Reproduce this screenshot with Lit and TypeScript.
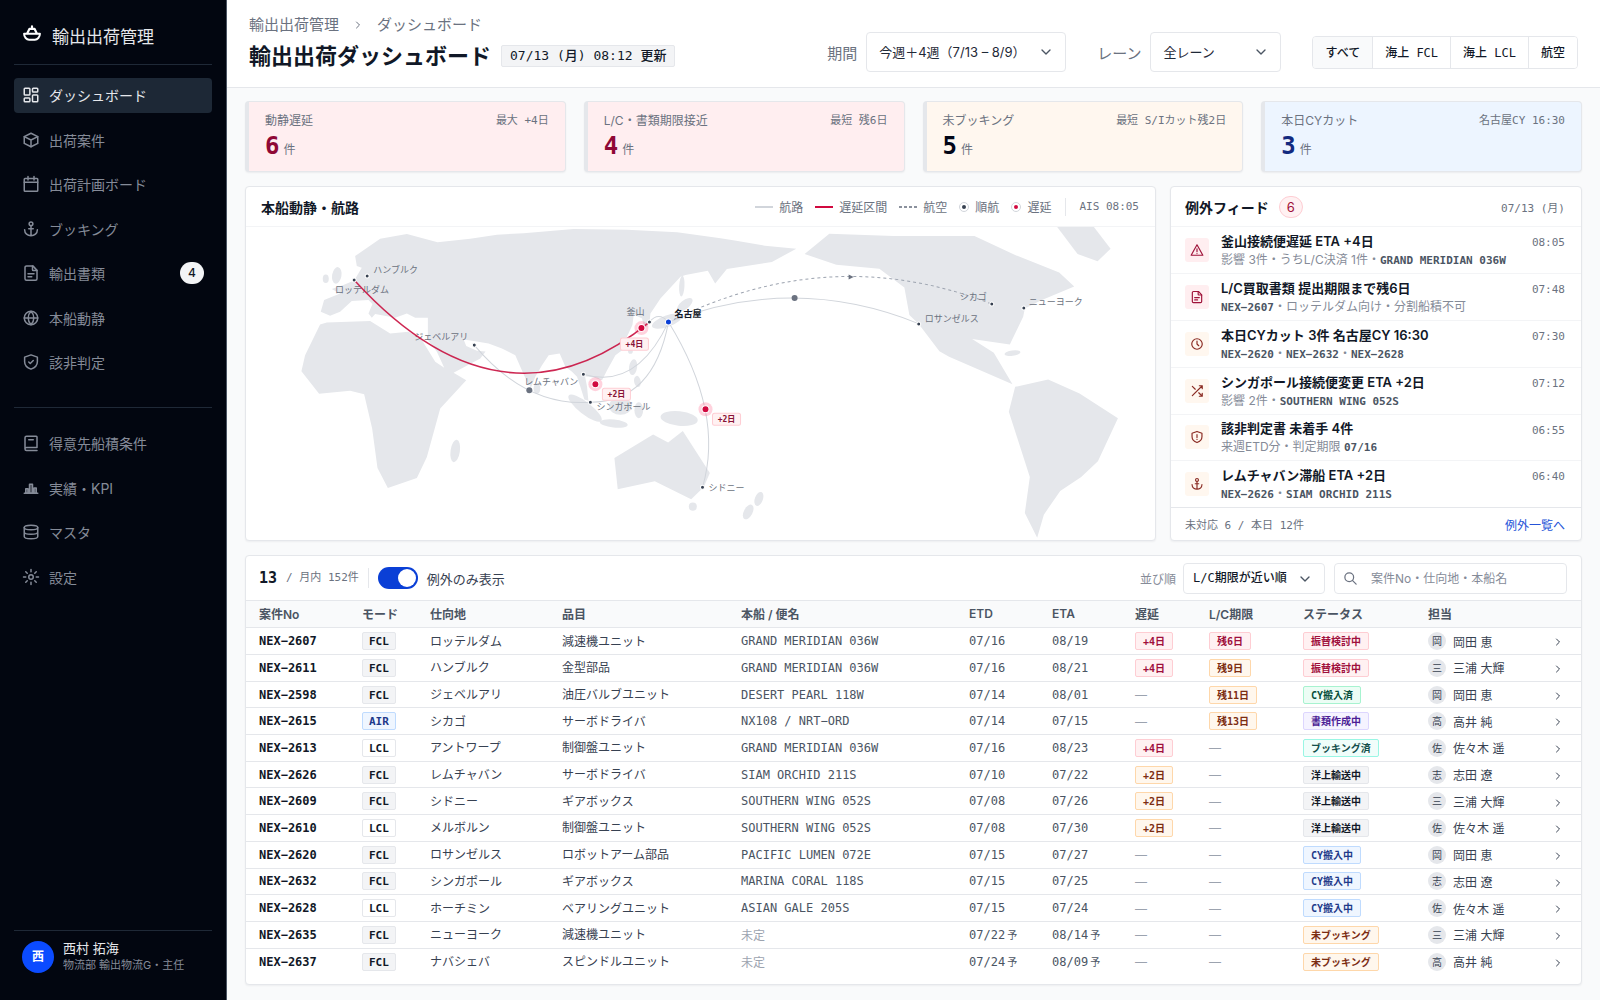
import { LitElement, html, svg, css, nothing, type TemplateResult } from "lit";
import { customElement, property } from "lit/decorators.js";
import { classMap } from "lit/directives/class-map.js";

const SANS = css`Inter, "Noto Sans CJK JP", sans-serif`;
const MONO = css`"DejaVu Sans Mono", "Noto Sans CJK JP", monospace`;

/* ---------- icons (24 unit grid, stroked) ---------- */

const ICONS: Record<string, TemplateResult> = {
  ship: svg`<path d="M12 4v3M6.500 12l2.500-5h6l2.500 5" stroke-width="2.600" /><path d="M2.500 13h19c0 4-3 7-6 7h-7c-3 0-6-3-6-7z" stroke-width="2.400" />`,
  dashboard: svg`<rect x="3" y="3" width="7.500" height="9" rx="1" /><rect x="3" y="16" width="7.500" height="5" rx="1" /><rect x="14" y="3" width="7" height="5" rx="1" /><rect x="14" y="12" width="7" height="9" rx="1" />`,
  box: svg`<path d="M12 3l9 4.500v9L12 21l-9-4.500v-9z" /><path d="M12 12l9-4.500M12 12v9M12 12L3 7.500" />`,
  calendar: svg`<rect x="3" y="4.500" width="18" height="17" rx="1" /><path d="M8 2v4.500M16 2v4.500M3 9.500h18" />`,
  anchor: svg`<path d="M12 8v13M3.500 13c0 5 4 8 8.500 8s8.500-3 8.500-8M9 11.500h6" /><circle cx="12" cy="5" r="2.500" />`,
  file: svg`<path d="M14 2.500v5a1 1 0 0 0 1 1h5" /><path d="M18 21.500H6a2 2 0 0 1-2-2v-15a2 2 0 0 1 2-2h8.500l5.500 6v11a2 2 0 0 1-2 2zM8 13h8M8 17h5" />`,
  globe: svg`<circle cx="12" cy="12" r="9" /><path d="M3 12h18M12 3c-5 5-5 13 0 18M12 3c5 5 5 13 0 18" />`,
  shieldCheck: svg`<path d="M12 2.500l8.500 3v6c0 5-3 8-8.500 10-5.500-2-8.500-5-8.500-10v-6z" /><path d="M9 12l2 2 4-4" />`,
  book: svg`<path d="M20 18H6a2 2 0 0 0-2 2V5a2 2 0 0 1 2-2h13a1 1 0 0 1 1 1v14M20 22H6a2 2 0 0 1-2-2M9 7.500h6" />`,
  chart: svg`<path d="M3 19h18" /><path d="M5 13h3v6H5zM10 7h4v12h-4zM16 12h3v7h-3z" fill="currentColor" fill-opacity=".5" />`,
  database: svg`<ellipse cx="12" cy="6" rx="9" ry="3" /><path d="M3 6v6c0 2 4.500 3 9 3s9-1 9-3V6M3 12v6c0 2 4.500 3 9 3s9-1 9-3v-6" />`,
  sun: svg`<circle cx="12" cy="12" r="3" /><path d="M12 2v3M12 19v3M2 12h3M19 12h3M5 5l2 2M17 17l2 2M5 19l2-2M17 7l2-2" />`,
  alert: svg`<path d="M12 3L2 21h20z" /><path d="M12 10v5M12 18v.2" />`,
  clock: svg`<circle cx="12" cy="12" r="9" /><path d="M12 7v5l3 3" />`,
  shuffle: svg`<path d="M16 3h5v5M4 20L21 3M21 16v5h-5M15 15l6 6M4 4l5 5" />`,
  shieldAlert: svg`<path d="M12 2.500l8.500 3v6c0 5-3 8-8.500 10-5.500-2-8.500-5-8.500-10v-6z" /><path d="M12 8v5M12 16v.3" />`,
  chevronDown: svg`<path d="M6 9l6 6 6-6" />`,
  chevronRight: svg`<path d="M9 6l6 6-6 6" />`,
  search: svg`<circle cx="10" cy="10" r="7" /><path d="M21 21l-6-6" />`,
};

@customElement("line-icon")
export class LineIcon extends LitElement {
  @property() name = "";

  static styles = css`
    :host { display: inline-flex; flex: none; width: 18px; height: 18px; }
    .glyph { width: 100%; height: 100%; }
  `;

  render() {
    return html`<svg class="glyph" viewBox="0 0 24 24" fill="none" stroke="currentColor" stroke-width="2"
      stroke-linecap="round" stroke-linejoin="round" aria-hidden="true">${ICONS[this.name]}</svg>`;
  }
}

/* ---------- sidebar ---------- */

interface NavItem { icon: string; label: string; badge?: number; active?: boolean }

const NAV_MAIN: NavItem[] = [
  { icon: "dashboard", label: "ダッシュボード", active: true },
  { icon: "box", label: "出荷案件" },
  { icon: "calendar", label: "出荷計画ボード" },
  { icon: "anchor", label: "ブッキング" },
  { icon: "file", label: "輸出書類", badge: 4 },
  { icon: "globe", label: "本船動静" },
  { icon: "shieldCheck", label: "該非判定" },
];

const NAV_SUB: NavItem[] = [
  { icon: "book", label: "得意先船積条件" },
  { icon: "chart", label: "実績・KPI" },
  { icon: "database", label: "マスタ" },
  { icon: "sun", label: "設定" },
];

@customElement("side-bar")
export class SideBar extends LitElement {
  static styles = css`
    :host {
      display: flex; flex-direction: column; box-sizing: border-box; padding: 0 14px 27px 14px;
      background: #020610; border-right: 1px solid #4b5563; color: #858b98; font-family: ${SANS};
    }
    .brand { display: flex; align-items: center; gap: 10px; height: 65px; padding: 6px 8px 0; box-sizing: border-box; color: #e5e7eb; font-size: 17px; border-bottom: 1px solid #1f2937; }
    .brand-icon { width: 20px; height: 20px; color: #fff; margin-bottom: 4px; }
    .list { list-style: none; margin: 0; padding: 0; display: flex; flex-direction: column; justify-content: space-between; }
    .main-list { margin-top: 13px; height: 302px; }
    .sub-list { margin-top: 18px; height: 169px; }
    .rule { border: 0; border-top: 1px solid #1f2937; margin: 27px 0 0; }
    .link { display: flex; align-items: center; gap: 9px; box-sizing: border-box; height: 35px; padding: 0 8px 1px; border-radius: 4px; font-size: 14px; color: inherit; text-decoration: none; }
    .active { background: #1d2836; color: #e5e7eb; }
    .count { margin-left: auto; width: 24px; height: 22px; border-radius: 11px; background: #f3f4f6; color: #111827; font: 500 12px/22px ${SANS}; text-align: center; }
    .user { margin-top: auto; border-top: 1px solid #1f2937; padding: 9px 8px 0; display: flex; align-items: center; gap: 9px; }
    .face { width: 32px; height: 32px; border-radius: 50%; background: #0b4bff; color: #fff; font-size: 12px; font-weight: 700; line-height: 32px; text-align: center; }
    .who { display: flex; flex-direction: column; }
    .name { font-size: 13px; line-height: 17px; color: #e5e7eb; }
    .role { font-size: 11px; line-height: 16px; }
  `;

  private item(i: NavItem) {
    return html`<li><a href="#" class=${classMap({ link: true, active: !!i.active })}>
      <line-icon name=${i.icon}></line-icon><span>${i.label}</span>
      ${i.badge ? html`<span class="count">${i.badge}</span>` : nothing}</a></li>`;
  }

  render() {
    return html`
      <div class="brand"><line-icon class="brand-icon" name="ship"></line-icon><span>輸出出荷管理</span></div>
      <nav>
        <ul class="list main-list">${NAV_MAIN.map((i) => this.item(i))}</ul>
        <hr class="rule" />
        <ul class="list sub-list">${NAV_SUB.map((i) => this.item(i))}</ul>
      </nav>
      <div class="user"><span class="face">西</span>
        <div class="who"><span class="name">西村 拓海</span><span class="role">物流部 輸出物流G・主任</span></div>
      </div>`;
  }
}

/* ---------- page header ---------- */

@customElement("page-header")
export class PageHeader extends LitElement {
  static styles = css`
    :host { display: flex; justify-content: space-between; align-items: flex-end; box-sizing: border-box; padding: 12px 22px 15px 22px; background: #fff; border-bottom: 1px solid #e5e7eb; font-family: ${SANS}; color: #111827; }
    .crumbs { display: flex; align-items: center; gap: 13px; font-size: 15px; line-height: 25px; color: #6b7280; margin-bottom: 3px; }
    .crumb { color: inherit; text-decoration: none; }
    .sep { width: 12px; height: 12px; }
    .title-row { display: flex; align-items: center; gap: 10px; }
    .title { margin: 0; font-size: 22px; line-height: 32px; font-weight: 600; white-space: nowrap; }
    .stamp { box-sizing: border-box; height: 22px; padding: 0 8px; border: 1px solid #e5e7eb; border-radius: 2px; background: #f3f4f6; font: 500 13px/20px ${MONO}; white-space: nowrap; }
    .filters { display: flex; align-items: center; }
    .label { font-size: 15px; color: #6b7280; margin-right: 9px; }
    .pick { position: relative; display: flex; width: 131px; margin-right: 31px; }
    .pick-period { width: 200px; }
    .select { appearance: none; width: 100%; height: 40px; padding: 0 30px 0 12px; border: 1px solid #e5e7eb; border-radius: 4px; background: #fff; color: #1f2937; font: 400 13px ${SANS}; }
    .caret { position: absolute; right: 12px; top: 12px; width: 16px; height: 16px; color: #4b5563; pointer-events: none; }
    .segments { display: flex; border: 1px solid #e5e7eb; border-radius: 4px; overflow: hidden; }
    .seg { border: 0; border-left: 1px solid #e5e7eb; padding: 0 12px 2px; height: 31px; background: #fff; color: #111827; font: 500 12px ${MONO}; white-space: nowrap; }
    .seg:first-child { border-left: 0; background: #f9fafb; }
  `;

  render() {
    return html`
      <div>
        <nav class="crumbs"><a class="crumb" href="#">輸出出荷管理</a><line-icon class="sep" name="chevronRight"></line-icon><span>ダッシュボード</span></nav>
        <div class="title-row"><h1 class="title">輸出出荷ダッシュボード</h1><span class="stamp">07/13 (月) 08:12 更新</span></div>
      </div>
      <div class="filters">
        <label class="label" for="period">期間</label>
        <span class="pick pick-period"><select class="select" id="period"><option>今週＋4週（7/13 – 8/9）</option></select><line-icon class="caret" name="chevronDown"></line-icon></span>
        <label class="label" for="lane">レーン</label>
        <span class="pick"><select class="select" id="lane"><option>全レーン</option></select><line-icon class="caret" name="chevronDown"></line-icon></span>
        <div class="segments" role="group" aria-label="輸送モード">
          ${["すべて", "海上 FCL", "海上 LCL", "航空"].map((t) => html`<button class="seg" type="button">${t}</button>`)}
        </div>
      </div>`;
  }
}

/* ---------- KPI cards ---------- */

const KPIS = [
  { label: "動静遅延", value: 6, note: "最大 +4日", tone: "rose" },
  { label: "L/C・書類期限接近", value: 4, note: "最短 残6日", tone: "rose" },
  { label: "未ブッキング", value: 5, note: "最短 S/Iカット残2日", tone: "amber" },
  { label: "本日CYカット", value: 3, note: "名古屋CY 16:30", tone: "blue" },
];

@customElement("kpi-strip")
export class KpiStrip extends LitElement {
  static styles = css`
    :host { display: grid; grid-template-columns: repeat(4, minmax(0, 1fr)); gap: 18px; font-family: ${SANS}; }
    .card { box-sizing: border-box; height: 71px; padding: 9px 16px 0; border: 1px solid #e5e7eb; border-left-width: 4px; border-radius: 4px; box-shadow: 0 1px 2px rgba(17, 24, 39, 0.06); color: #6b7280; }
    .rose { background: #ffeef0; }
    .amber { background: #fff7ef; }
    .blue { background: #edf5ff; }
    .top { display: flex; justify-content: space-between; align-items: center; font-size: 12px; line-height: 18px; }
    .note { font: 11px/20px ${MONO}; }
    .figure { display: flex; align-items: baseline; gap: 4px; line-height: 30px; }
    .value { font: 700 24px/30px ${MONO}; color: #020617; }
    .rose .value { color: #8f0836; }
    .blue .value { color: #12297f; }
    .unit { font-size: 12px; }
  `;

  render() {
    return KPIS.map((k) => html`<section class="card ${k.tone}">
      <div class="top"><span>${k.label}</span><span class="note">${k.note}</span></div>
      <div class="figure"><span class="value">${k.value}</span><span class="unit">件</span></div>
    </section>`);
  }
}

/* ---------- route map ---------- */

const LAND = [
  "345,228 420,176 500,162 592,187 690,176 770,164 850,160 1000,147 1160,149 1310,157 1440,175 1487,182 1573,197 1667,206 1594,246 1459,267 1424,310 1402,272 1335,285 1320,290 1260,355 1230,400 1228,420 1220,440 1210,440 1205,415 1180,403 1176,435 1155,480 1145,510 1125,525 1100,570 1085,600 1060,592 1034,588 1040,620 1044,662 1032,658 1020,620 1010,590 995,575 975,560 958,520 925,525 905,555 885,590 872,622 858,600 840,560 825,525 785,505 745,490 700,483 670,478 678,498 710,512 736,514 720,535 640,578 678,600 600,685 560,830 530,893 443,923 412,863 396,745 372,642 330,632 237,641 184,573 195,525 240,433 260,427 390,423 450,460 505,455 545,480 585,545 612,563 590,515 563,480 563,413 525,413 500,400 465,413 405,402 395,413 385,400 397,372 385,360 335,363 300,395 270,407 242,395 252,360 300,340 275,327 310,315 342,301 365,263 350,258",
  "1122,833 1238,763 1283,787 1327,752 1408,878 1390,920 1352,957 1243,903 1132,927",
  "1692,222 1766,161 1959,168 2201,168 2323,225 2455,277 2500,319 2398,362 2352,385 2347,410 2307,493 2194,477 2259,518 2315,612 2125,530 2096,513 2034,432 2006,405 1991,322 1916,266 1787,254",
  "2449,141 2559,141 2609,206 2570,244 2510,222",
  "2323,620 2422,598 2516,640 2631,714 2571,843 2521,890 2458,932 2409,1003 2389,1072 2352,998 2367,890 2304,695",
];

// cx, cy, rx, ry, rotation
const ISLANDS: number[][] = [
  [290, 286, 14, 25, 10], [257, 296, 9, 13, 0], [645, 812, 14, 34, 8], [890, 625, 10, 16, 0],
  [1034, 684, 62, 18, 38], [1120, 730, 42, 12, 6], [1140, 678, 34, 26, 0], [1195, 690, 13, 24, 0],
  [1178, 561, 12, 24, 8], [1191, 604, 10, 17, -10], [1170, 513, 7, 8, 0], [1316, 715, 56, 22, 6],
  [1280, 423, 48, 17, -20], [1333, 374, 28, 13, -38], [1324, 318, 8, 31, 3], [1357, 979, 12, 12, 0],
  [1555, 956, 12, 22, 20], [1523, 995, 13, 24, 28], [2315, 519, 24, 8, -8],
];

const ROUTES = [
  "M422 95Q412 84 403 95",
  "M422 95Q390 163 337 147",
  "M422 95Q407 175 344 175",
  "M344 175Q280 180 228 118",
  "M422 95Q478 186 456 260",
  "M422 95Q548 46 673 97",
];

interface Port { x: number; y: number; lx: number; ly: number; name: string; end?: boolean; home?: boolean }

const PORTS: Port[] = [
  { x: 108, y: 53, lx: 89, ly: 66, name: "ロッテルダム" },
  { x: 121, y: 49, lx: 127, ly: 46, name: "ハンブルク" },
  { x: 228, y: 118, lx: 222, ly: 113, name: "ジェベルアリ", end: true },
  { x: 337, y: 147, lx: 332, ly: 158, name: "レムチャバン", end: true },
  { x: 344, y: 175, lx: 350, ly: 183, name: "シンガポール" },
  { x: 403, y: 95, lx: 398, ly: 88, name: "釜山", end: true },
  { x: 422, y: 95, lx: 428, ly: 90, name: "名古屋", home: true },
  { x: 456, y: 260, lx: 462, ly: 264, name: "シドニー" },
  { x: 672, y: 97, lx: 678, ly: 95, name: "ロサンゼルス" },
  { x: 745, y: 77, lx: 740, ly: 73, name: "シカゴ", end: true },
  { x: 777, y: 81, lx: 782, ly: 78, name: "ニューヨーク" },
];

const DELAYED = [
  { x: 395, y: 101, bx: 374, by: 111, text: "+4日" },
  { x: 349, y: 157, bx: 356, by: 161, text: "+2日" },
  { x: 459, y: 182, bx: 466, by: 186, text: "+2日" },
];

@customElement("route-map")
export class RouteMap extends LitElement {
  static styles = css`
    :host { display: flex; flex-direction: column; border: 1px solid #e5e7eb; border-radius: 4px; background: #fff; overflow: hidden; padding-bottom: 1px; font-family: ${SANS}; box-shadow: 0 1px 2px rgba(17, 24, 39, 0.05); }
    .head { display: flex; align-items: center; justify-content: space-between; height: 39px; padding: 0 16px 0 15px; border-bottom: 1px solid #f3f4f6; }
    .title { margin: 0; font-size: 14px; font-weight: 600; color: #111827; }
    .legend { display: flex; align-items: center; gap: 12px; font-size: 12px; color: #6b7280; }
    .key { display: flex; align-items: center; gap: 6px; }
    .line { width: 18px; height: 2px; background: #d1d5db; }
    .late { background: #d1093f; }
    .air { background: repeating-linear-gradient(90deg, #8b919d 0 3px, transparent 3px 5px); }
    .dot { width: 4px; height: 4px; border-radius: 50%; background: #374151; border: 2px solid #fff; outline: 1px solid #d1d5db; margin: 0 1px; }
    .dot-late { background: #d1093f; }
    .ais { border-left: 1px solid #e5e7eb; margin-left: 2px; padding-left: 13px; font: 11px/18px ${MONO}; }
    .map { display: block; width: 100%; height: auto; }
    .land { fill: #e5e7eb; }
    .route { fill: none; stroke: #d1d5db; stroke-width: 1; }
    .route-late { fill: none; stroke: #c8103f; stroke-width: 1.5; stroke-opacity: 0.9; }
    .route-air { fill: none; stroke: #9ca3af; stroke-width: 1; stroke-dasharray: 3 3; }
    .port { fill: #374151; stroke: #fff; stroke-width: 1; }
    .home { fill: #0a3fd6; }
    .ship { fill: #6b7280; }
    .halo { fill: #ff2056; fill-opacity: 0.2; }
    .hot { fill: #d1093f; stroke: #fff; stroke-width: 1; }
    .name { font-size: 9px; fill: #6b7280; }
    .name-home { font-weight: 700; fill: #111827; }
    .tag { fill: #fff1f2; stroke: #fecdd3; }
    .tag-text { font: 700 8px ${MONO}; fill: #881337; }
  `;

  render() {
    return html`
      <header class="head">
        <h2 class="title">本船動静・航路</h2>
        <div class="legend">
          <span class="key"><i class="line"></i>航路</span>
          <span class="key"><i class="line late"></i>遅延区間</span>
          <span class="key"><i class="line air"></i>航空</span>
          <span class="key"><i class="dot"></i>順航</span>
          <span class="key"><i class="dot dot-late"></i>遅延</span>
          <span class="ais">AIS 08:05</span>
        </div>
      </header>
      <svg class="map" viewBox="0 0 908 312" role="img" aria-label="本船動静・航路">
        <g class="land" transform="translate(-6 -47) scale(0.33333)">
          ${LAND.map((p) => svg`<polygon points=${p} />`)}
          ${ISLANDS.map(([cx, cy, rx, ry, r]) => svg`<ellipse cx=${cx} cy=${cy} rx=${rx} ry=${ry} transform="rotate(${r} ${cx} ${cy})" />`)}
        </g>
        ${ROUTES.map((d) => svg`<path class="route" d=${d} />`)}
        <path class="route-air" d="M422 95Q584 14 745 77" />
        ${PORTS.map((p) => svg`<text class=${p.home ? "name name-home" : "name"} x=${p.lx} y=${p.ly} text-anchor=${p.end ? "end" : "start"}>${p.name}</text>`)}
        <path class="route-late" d="M403 95Q256 215 108 53" />
        <path class="ship" d="M602 47.500l5 2.500-5 2.500z" />
        <circle class="ship" cx="283" cy="163" r="3" />
        <circle class="ship" cx="548" cy="71" r="3" />
        ${PORTS.map((p) => svg`<circle class=${p.home ? "port home" : "port"} cx=${p.x} cy=${p.y} r=${p.home ? 3 : 2} />`)}
        ${DELAYED.map((s) => svg`
          <circle class="halo" cx=${s.x} cy=${s.y} r="7" /><circle class="hot" cx=${s.x} cy=${s.y} r="3.500" />
          <rect class="tag" x=${s.bx} y=${s.by} width="28" height="12" rx="2" />
          <text class="tag-text" x=${s.bx + 14} y=${s.by + 9} text-anchor="middle">${s.text}</text>`)}
      </svg>`;
  }
}

/* ---------- exception feed ---------- */

const code = (t: string) => html`<b class="code">${t}</b>`;

const FEED = [
  { icon: "alert", tone: "rose", title: "釜山接続便遅延 ETA +4日", time: "08:05", sub: html`影響 3件・うちL/C決済 1件・${code("GRAND MERIDIAN 036W")}` },
  { icon: "file", tone: "rose", title: "L/C買取書類 提出期限まで残6日", time: "07:48", sub: html`${code("NEX−2607")}・ロッテルダム向け・分割船積不可` },
  { icon: "clock", tone: "amber", title: "本日CYカット 3件 名古屋CY 16:30", time: "07:30", sub: html`${code("NEX−2620")}・${code("NEX−2632")}・${code("NEX−2628")}` },
  { icon: "shuffle", tone: "amber", title: "シンガポール接続便変更 ETA +2日", time: "07:12", sub: html`影響 2件・${code("SOUTHERN WING 052S")}` },
  { icon: "shieldAlert", tone: "amber", title: "該非判定書 未着手 4件", time: "06:55", sub: html`来週ETD分・判定期限 ${code("07/16")}` },
  { icon: "anchor", tone: "amber", title: "レムチャバン滞船 ETA +2日", time: "06:40", sub: html`${code("NEX−2626")}・${code("SIAM ORCHID 211S")}` },
];

@customElement("exception-feed")
export class ExceptionFeed extends LitElement {
  static styles = css`
    :host { display: flex; flex-direction: column; border: 1px solid #e5e7eb; border-radius: 4px; background: #fff; font-family: ${SANS}; color: #6b7280; box-shadow: 0 1px 2px rgba(17, 24, 39, 0.05); }
    .head { display: flex; align-items: center; gap: 10px; height: 39px; padding: 0 16px 0 14px; border-bottom: 1px solid #f3f4f6; }
    .title { margin: 0; font-size: 14px; font-weight: 600; color: #111827; }
    .count { box-sizing: border-box; width: 24px; height: 22px; border: 1px solid #fecdd3; border-radius: 11px; background: #fff1f2; color: #9f1239; font-size: 13px; line-height: 20px; text-align: center; }
    .date { margin-left: auto; font: 11px ${MONO}; }
    .list { list-style: none; margin: 0; padding: 0; flex: 1; display: grid; grid-auto-rows: 1fr; }
    .row { display: flex; align-items: center; gap: 12px; padding: 0 16px 0 14px; border-bottom: 1px solid #f3f4f6; }
    .row:last-child { border-bottom-color: #e5e7eb; }
    .badge { display: flex; align-items: center; justify-content: center; width: 24px; height: 24px; border-radius: 3px; }
    .rose { background: #ffeef0; color: #9f1239; }
    .amber { background: #fff7ef; color: #8a2a22; }
    .ico { width: 14px; height: 14px; }
    .body { flex: 1; min-width: 0; }
    .line { margin: 0; font-size: 13px; line-height: 19px; font-weight: 600; color: #111827; white-space: nowrap; }
    .sub { margin: 0; font-size: 12px; line-height: 17px; color: #858b98; white-space: nowrap; }
    .code { font: 700 11px ${MONO}; color: #4b5563; }
    .time { align-self: flex-start; padding-top: 6px; font: 11px/19px ${MONO}; }
    .foot { display: flex; justify-content: space-between; align-items: center; height: 32px; padding: 0 16px 0 14px; font: 11px ${MONO}; }
    .all { font: 12px ${SANS}; color: #2554d8; text-decoration: none; }
  `;

  render() {
    return html`
      <header class="head"><h2 class="title">例外フィード</h2><span class="count">6</span><span class="date">07/13 (月)</span></header>
      <ul class="list">
        ${FEED.map((f) => html`<li class="row">
          <span class="badge ${f.tone}"><line-icon class="ico" name=${f.icon}></line-icon></span>
          <div class="body"><p class="line">${f.title}</p><p class="sub">${f.sub}</p></div>
          <time class="time">${f.time}</time>
        </li>`)}
      </ul>
      <footer class="foot"><span>未対応 6 / 本日 12件</span><a class="all" href="#">例外一覧へ</a></footer>`;
  }
}

/* ---------- shipment table ---------- */

// id, mode, destination, item, vessel, ETD, ETA, delay, L/C, status, owner
const ROWS: string[][] = [
  ["NEX−2607", "FCL", "ロッテルダム", "減速機ユニット", "GRAND MERIDIAN 036W", "07/16", "08/19", "+4日", "残6日", "振替検討中", "岡田 恵"],
  ["NEX−2611", "FCL", "ハンブルク", "金型部品", "GRAND MERIDIAN 036W", "07/16", "08/21", "+4日", "残9日", "振替検討中", "三浦 大輝"],
  ["NEX−2598", "FCL", "ジェベルアリ", "油圧バルブユニット", "DESERT PEARL 118W", "07/14", "08/01", "", "残11日", "CY搬入済", "岡田 恵"],
  ["NEX−2615", "AIR", "シカゴ", "サーボドライバ", "NX108 / NRT−ORD", "07/14", "07/15", "", "残13日", "書類作成中", "高井 純"],
  ["NEX−2613", "LCL", "アントワープ", "制御盤ユニット", "GRAND MERIDIAN 036W", "07/16", "08/23", "+4日", "", "ブッキング済", "佐々木 遥"],
  ["NEX−2626", "FCL", "レムチャバン", "サーボドライバ", "SIAM ORCHID 211S", "07/10", "07/22", "+2日", "", "洋上輸送中", "志田 遼"],
  ["NEX−2609", "FCL", "シドニー", "ギアボックス", "SOUTHERN WING 052S", "07/08", "07/26", "+2日", "", "洋上輸送中", "三浦 大輝"],
  ["NEX−2610", "LCL", "メルボルン", "制御盤ユニット", "SOUTHERN WING 052S", "07/08", "07/30", "+2日", "", "洋上輸送中", "佐々木 遥"],
  ["NEX−2620", "FCL", "ロサンゼルス", "ロボットアーム部品", "PACIFIC LUMEN 072E", "07/15", "07/27", "", "", "CY搬入中", "岡田 恵"],
  ["NEX−2632", "FCL", "シンガポール", "ギアボックス", "MARINA CORAL 118S", "07/15", "07/25", "", "", "CY搬入中", "志田 遼"],
  ["NEX−2628", "LCL", "ホーチミン", "ベアリングユニット", "ASIAN GALE 205S", "07/15", "07/24", "", "", "CY搬入中", "佐々木 遥"],
  ["NEX−2635", "FCL", "ニューヨーク", "減速機ユニット", "", "07/22予", "08/14予", "", "", "未ブッキング", "三浦 大輝"],
  ["NEX−2637", "FCL", "ナバシェバ", "スピンドルユニット", "", "07/24予", "08/09予", "", "", "未ブッキング", "高井 純"],
];

const TONES: Record<string, string> = {
  FCL: "gray", LCL: "plain", AIR: "blue",
  "+4日": "rose", "+2日": "amber",
  残6日: "rose", 残9日: "amber", 残11日: "amber", 残13日: "amber",
  振替検討中: "rose", CY搬入済: "green", 書類作成中: "violet", ブッキング済: "teal",
  洋上輸送中: "gray", CY搬入中: "blue", 未ブッキング: "amber",
};

const COLUMNS = ["案件No", "モード", "仕向地", "品目", "本船 / 便名", "ETD", "ETA", "遅延", "L/C期限", "ステータス", "担当"];

@customElement("shipment-table")
export class ShipmentTable extends LitElement {
  static styles = css`
    :host { display: block; border: 1px solid #e5e7eb; border-radius: 4px; background: #fff; overflow: hidden; padding-bottom: 9px; font-family: ${SANS}; color: #374151; box-shadow: 0 1px 2px rgba(17, 24, 39, 0.05); }
    .bar { display: flex; align-items: center; height: 44px; padding: 0 14px 0 13px; font-size: 12px; color: #6b7280; }
    .total { font: 700 15px ${MONO}; color: #111827; }
    .month { font: 11px/20px ${MONO}; margin-left: 9px; padding-right: 9px; border-right: 1px solid #e5e7eb; }
    .toggle { display: flex; align-items: center; gap: 9px; margin-left: 9px; font-size: 13px; color: #374151; }
    .switch { appearance: none; box-sizing: border-box; width: 40px; height: 22px; margin: 0; padding: 2px; border-radius: 11px; background: #0a3fd6; display: flex; justify-content: flex-end; }
    .switch::before { content: ""; width: 18px; height: 18px; border-radius: 50%; background: #fff; }
    .sort-label { margin-left: auto; margin-right: 7px; color: #858b98; }
    .pick { position: relative; display: flex; width: 142px; margin-right: 9px; }
    .select { appearance: none; width: 100%; height: 31px; padding: 0 28px 0 9px; border: 1px solid #e5e7eb; border-radius: 4px; background: #fff; color: #111827; font: 500 12px ${MONO}; }
    .caret { position: absolute; right: 12px; top: 8px; width: 16px; height: 16px; color: #4b5563; pointer-events: none; }
    .search { position: relative; display: flex; width: 233px; }
    .input { box-sizing: border-box; width: 100%; height: 31px; padding: 0 10px 0 36px; border: 1px solid #e5e7eb; border-radius: 4px; background: #fff; font: 12px ${SANS}; color: #111827; }
    .input::placeholder { color: #858b98; opacity: 1; }
    .lens { position: absolute; left: 9px; top: 8px; width: 15px; height: 15px; color: #6b7280; pointer-events: none; }
    .grid { width: 100%; height: 375px; table-layout: fixed; border-collapse: separate; border-spacing: 0; font-size: 12px; }
    .th { height: 28px; box-sizing: border-box; padding: 0 0 1px 13px; text-align: left; font-weight: 600; color: #4b5563; background: #f9fafb; border-top: 1px solid #e5e7eb; border-bottom: 1px solid #e5e7eb; }
    .td { height: 26px; box-sizing: border-box; padding: 0 0 0 13px; white-space: nowrap; border-bottom: 1px solid #e5e7eb; }
    .text { padding-bottom: 2px; }
    .tr:last-child .td { border-bottom: 0; }
    .c1 { width: 103px; } .c2 { width: 68px; } .c3 { width: 132px; } .c4 { width: 179px; } .c5 { width: 228px; }
    .c6, .c7 { width: 83px; } .c8 { width: 74px; } .c9 { width: 94px; } .c10 { width: 125px; } .c11 { width: 124px; } .c12 { width: 42px; }
    .mono { font: 12px ${MONO}; color: #4b5563; }
    .id { font-weight: 700; color: #111827; }
    .none { color: #9ca3af; }
    .plan { font-size: 10px; padding-left: 2px; }
    .pill { display: inline-block; box-sizing: border-box; height: 18px; padding: 0 7px; border: 1px solid; border-radius: 2px; font: 700 10px/17px ${MONO}; vertical-align: middle; }
    .mode { padding: 0 6px; font-size: 11px; }
    .gray { background: #f3f4f6; border-color: #e5e7eb; color: #111827; }
    .plain { background: #fff; border-color: #e5e7eb; color: #111827; }
    .blue { background: #eff6ff; border-color: #bfdbfe; color: #1e3a8a; }
    .rose { background: #fff1f2; border-color: #fecdd3; color: #9f0f3c; }
    .amber { background: #fff7ed; border-color: #fed7aa; color: #7c2d12; }
    .green { background: #ecfdf5; border-color: #a7f3d0; color: #064e3b; }
    .teal { background: #f0fdfa; border-color: #99f6e4; color: #134e4a; }
    .violet { background: #f5f3ff; border-color: #ddd6fe; color: #4c1d95; }
    .owner { display: flex; align-items: center; gap: 7px; }
    .face { width: 18px; height: 18px; border-radius: 50%; background: #e5e7eb; font-size: 10px; line-height: 18px; text-align: center; }
    .go { width: 12px; height: 12px; color: #374151; vertical-align: middle; }
  `;

  private pill(t: string, extra = "") {
    return t ? html`<span class="pill ${TONES[t]} ${extra}">${t}</span>` : html`<span class="none">—</span>`;
  }

  private date(t: string) {
    return html`${t.slice(0, 5)}${t.length > 5 ? html`<span class="plan">${t.slice(5)}</span>` : nothing}`;
  }

  render() {
    return html`
      <div class="bar">
        <span class="total">13</span><span class="month">/ 月内 152件</span>
        <label class="toggle"><input class="switch" type="checkbox" role="switch" checked />例外のみ表示</label>
        <label class="sort-label" for="sort">並び順</label>
        <span class="pick"><select class="select" id="sort"><option>L/C期限が近い順</option></select><line-icon class="caret" name="chevronDown"></line-icon></span>
        <span class="search"><input class="input" type="search" aria-label="案件検索" placeholder="案件No・仕向地・本船名" /><line-icon class="lens" name="search"></line-icon></span>
      </div>
      <table class="grid">
        <thead><tr>${COLUMNS.map((c, i) => html`<th class="th c${i + 1}" scope="col">${c}</th>`)}<th class="th c12" scope="col" aria-label="詳細"></th></tr></thead>
        <tbody>
          ${ROWS.map(([id, mode, dest, item, vessel, etd, eta, delay, lc, status, owner]) => html`<tr class="tr">
            <td class="td mono id">${id}</td>
            <td class="td">${this.pill(mode, "mode")}</td>
            <td class="td text">${dest}</td>
            <td class="td text">${item}</td>
            <td class="td mono">${vessel || html`<span class="none">未定</span>`}</td>
            <td class="td mono">${this.date(etd)}</td>
            <td class="td mono">${this.date(eta)}</td>
            <td class="td">${this.pill(delay)}</td>
            <td class="td">${this.pill(lc)}</td>
            <td class="td">${this.pill(status)}</td>
            <td class="td"><span class="owner"><span class="face">${owner[0]}</span>${owner}</span></td>
            <td class="td"><line-icon class="go" name="chevronRight"></line-icon></td>
          </tr>`)}
        </tbody>
      </table>`;
  }
}

/* ---------- page ---------- */

@customElement("app-root")
export class AppRoot extends LitElement {
  static styles = css`
    :host { display: grid; grid-template-columns: 227px minmax(0, 1fr); min-height: 100vh; background: #f9fafb; }
    .content { display: flex; flex-direction: column; gap: 14px; padding: 13px 18px 14px; }
    .middle { display: grid; grid-template-columns: minmax(0, 1fr) 412px; gap: 14px; align-items: stretch; }
  `;

  render() {
    return html`
      <side-bar></side-bar>
      <main>
        <page-header></page-header>
        <div class="content">
          <kpi-strip></kpi-strip>
          <div class="middle"><route-map></route-map><exception-feed></exception-feed></div>
          <shipment-table></shipment-table>
        </div>
      </main>`;
  }
}
